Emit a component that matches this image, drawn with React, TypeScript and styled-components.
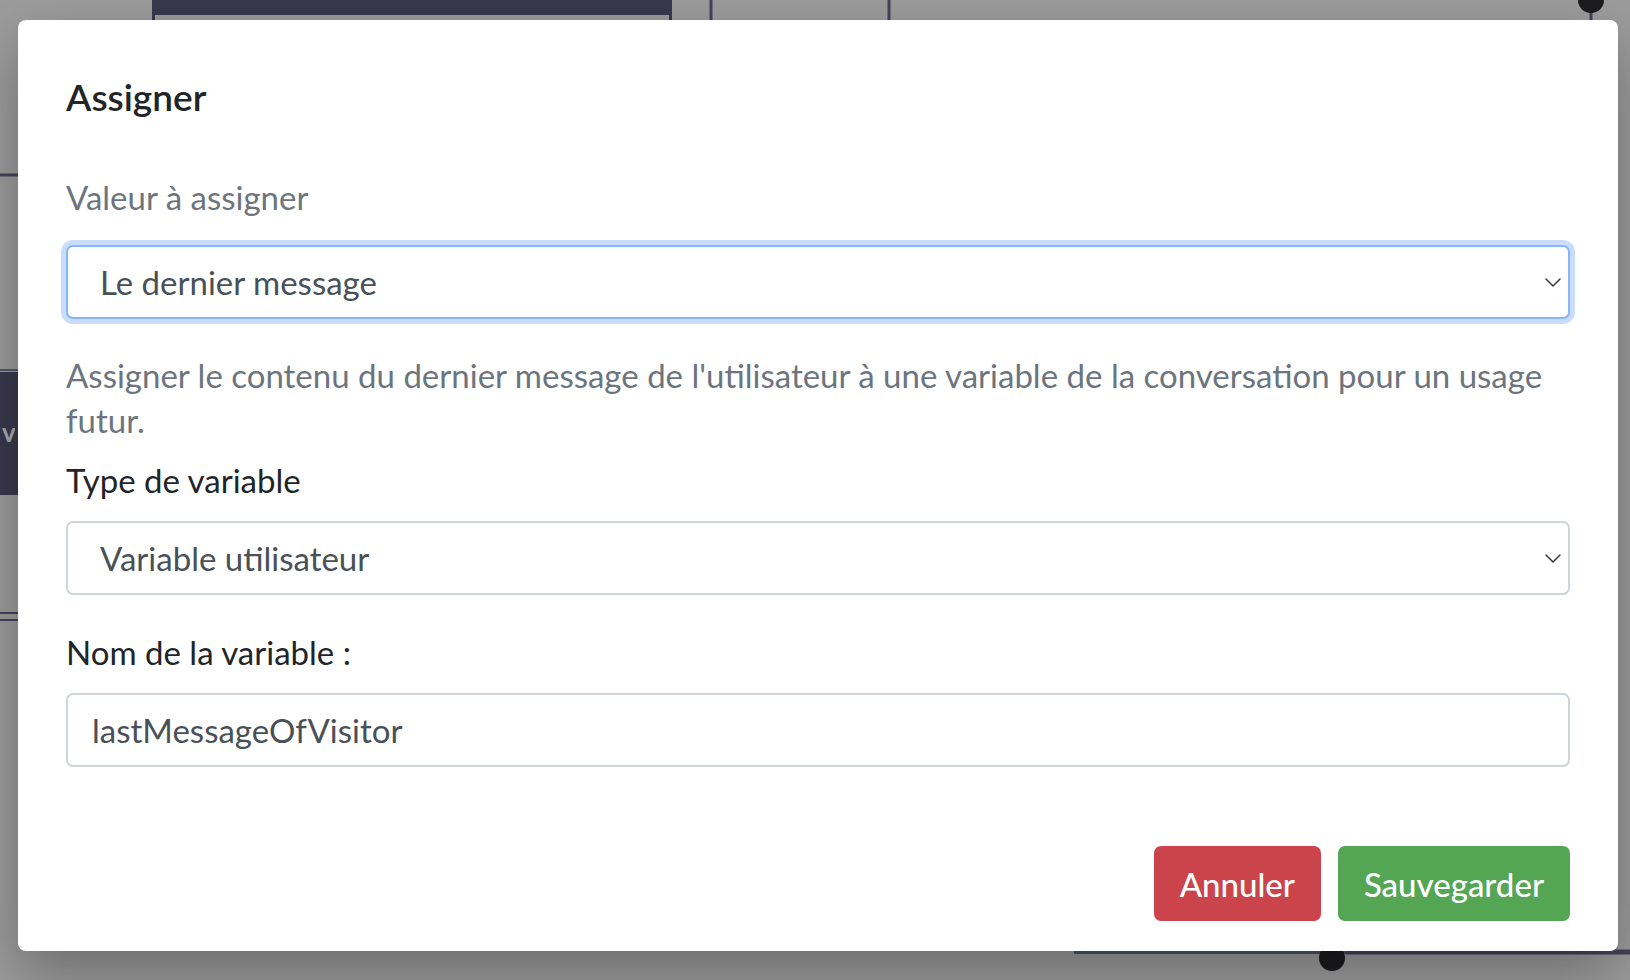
import styled, { createGlobalStyle } from 'styled-components'

const GlobalStyle = createGlobalStyle`
  html, body {
    margin: 0;
    padding: 0;
    background: #9c9c9c;
  }
  * {
    box-sizing: border-box;
  }
`

const FONT = `Lato, "Noto Sans", sans-serif`

const Canvas = styled.div`
  position: relative;
  width: 1630px;
  height: 980px;
  overflow: hidden;
  background: #9c9c9c;
  font-family: ${FONT};
`

// the flow builder that sits behind the backdrop
const Diagram = styled.svg`
  position: absolute;
  inset: 0;
  width: 1630px;
  height: 980px;
`

const FlowNode = styled.div<{ $header?: boolean }>`
  position: absolute;
  display: flex;
  align-items: center;
  padding-left: 2px;
  background: ${p => (p.$header ? '#3a384c' : '#9b9b9b')};
  border: 3px solid #3a384c;
  border-top: none;
  color: #a9a9b3;
  font-size: 26px;
  font-weight: 700;
  overflow: hidden;
`

const Backdrop = styled.div`
  position: absolute;
  inset: 0;
  display: flex;
  padding: 20px 12px 29px 18px;
`

const Modal = styled.div`
  flex: 1;
  display: flex;
  flex-direction: column;
  padding: 53px 48px 30px;
  background: #fff;
  border-radius: 8px;
  box-shadow: 0 24px 60px rgba(0, 0, 0, 0.3);
`

const Title = styled.h5`
  margin: 0 0 54px;
  font-size: 37px;
  line-height: 48px;
  font-weight: 600;
  color: #212529;
`

const Field = styled.div<{ $gap: number }>`
  display: flex;
  flex-direction: column;
  gap: ${p => p.$gap}px;
`

const Label = styled.label<{ $muted?: boolean }>`
  display: block;
  font-size: 33px;
  line-height: 45px;
  color: ${p => (p.$muted ? '#6c757d' : '#212529')};
`

const HelpText = styled.p`
  margin: 34px 0 15px;
  font-size: 33px;
  line-height: 45px;
  color: #6c757d;
`

const SelectWrap = styled.div`
  position: relative;
`

const Select = styled.select<{ $focused?: boolean }>`
  display: block;
  width: 100%;
  height: 74px;
  padding: 0 60px 0 32px;
  appearance: none;
  font-family: ${FONT};
  font-size: 33px;
  color: #495057;
  background: #fff;
  border: 2px solid ${p => (p.$focused ? '#86b7fe' : '#ced4da')};
  border-radius: 7px;
  box-shadow: ${p => (p.$focused ? '0 0 0 5px #c9dcfd' : 'none')};
  outline: none;
`

const Chevron = styled.svg`
  position: absolute;
  right: 9px;
  top: 50%;
  width: 16px;
  height: 9px;
  margin-top: -4px;
  pointer-events: none;
`

const TextInput = styled.input`
  display: block;
  width: 100%;
  height: 74px;
  padding: 0 24px;
  font-family: ${FONT};
  font-size: 33px;
  color: #495057;
  background: #fff;
  border: 2px solid #ced4da;
  border-radius: 7px;
  outline: none;
`

const Footer = styled.div`
  margin-top: auto;
  display: flex;
  justify-content: flex-end;
  gap: 17px;
`

const Button = styled.button<{ $variant: 'danger' | 'success' }>`
  height: 75px;
  padding: 0 26px;
  font-family: ${FONT};
  font-size: 33px;
  font-weight: 500;
  color: #fff;
  background: ${p => (p.$variant === 'danger' ? '#cc444b' : '#54a654')};
  border: none;
  border-radius: 7px;
  cursor: pointer;
`

const nodes = [
  { id: 'top', left: 152, top: 0, width: 520, height: 15, header: true },
  { id: 'top-body', left: 152, top: 15, width: 520, height: 25 },
  { id: 'side', left: -3, top: 372, width: 21, height: 123, header: true, label: 'v' },
]

function SelectField({ value, focused }: { value: string; focused?: boolean }) {
  return (
    <SelectWrap>
      <Select $focused={focused} defaultValue={value}>
        <option>{value}</option>
      </Select>
      <Chevron viewBox="0 0 16 9" fill="none">
        <path d="M1 1l7 7 7-7" stroke="#343a40" strokeWidth="1.5" strokeLinecap="round" strokeLinejoin="round" />
      </Chevron>
    </SelectWrap>
  )
}

export default function App() {
  return (
    <>
      <GlobalStyle />
      <Canvas>
        {nodes.map(n => (
          <FlowNode
            key={n.id}
            $header={n.header}
            style={{ left: n.left, top: n.top, width: n.width, height: n.height }}>
            {n.label}
          </FlowNode>
        ))}
        <Diagram viewBox="0 0 1630 980">
          <g stroke="#44435a" strokeWidth="3">
            <line x1="711" y1="0" x2="711" y2="40" />
            <line x1="889" y1="0" x2="889" y2="40" />
            <line x1="1591" y1="0" x2="1591" y2="40" />
            <line x1="0" y1="175" x2="30" y2="175" />
            <line x1="0" y1="370" x2="30" y2="370" strokeWidth="2" stroke="#56556c" />
            <line x1="0" y1="613" x2="30" y2="613" strokeWidth="2" />
            <line x1="0" y1="620" x2="30" y2="620" strokeWidth="2" />
            <line x1="1074" y1="952" x2="1346" y2="952" stroke="#4b5369" strokeWidth="4" />
            <line x1="1346" y1="952" x2="1630" y2="952" strokeWidth="5" />
          </g>
          <circle cx="1591" cy="0" r="13" fill="#1c1c1e" />
          <circle cx="1332" cy="958" r="13" fill="#1c1c1e" />
        </Diagram>

        <Backdrop>
          <Modal>
            <Title>Assigner</Title>
            <Field $gap={25}>
              <Label $muted>Valeur à assigner</Label>
              <SelectField value="Le dernier message" focused />
            </Field>
            <HelpText>
              Assigner le contenu du dernier message de l'utilisateur à une variable de la
              conversation pour un usage futur.
            </HelpText>
            <Field $gap={18}>
              <Label>Type de variable</Label>
              <SelectField value="Variable utilisateur" />
            </Field>
            <Field $gap={18} style={{ marginTop: 35 }}>
              <Label>Nom de la variable :</Label>
              <TextInput defaultValue="lastMessageOfVisitor" />
            </Field>
            <Footer>
              <Button $variant="danger">Annuler</Button>
              <Button $variant="success">Sauvegarder</Button>
            </Footer>
          </Modal>
        </Backdrop>
      </Canvas>
    </>
  )
}
